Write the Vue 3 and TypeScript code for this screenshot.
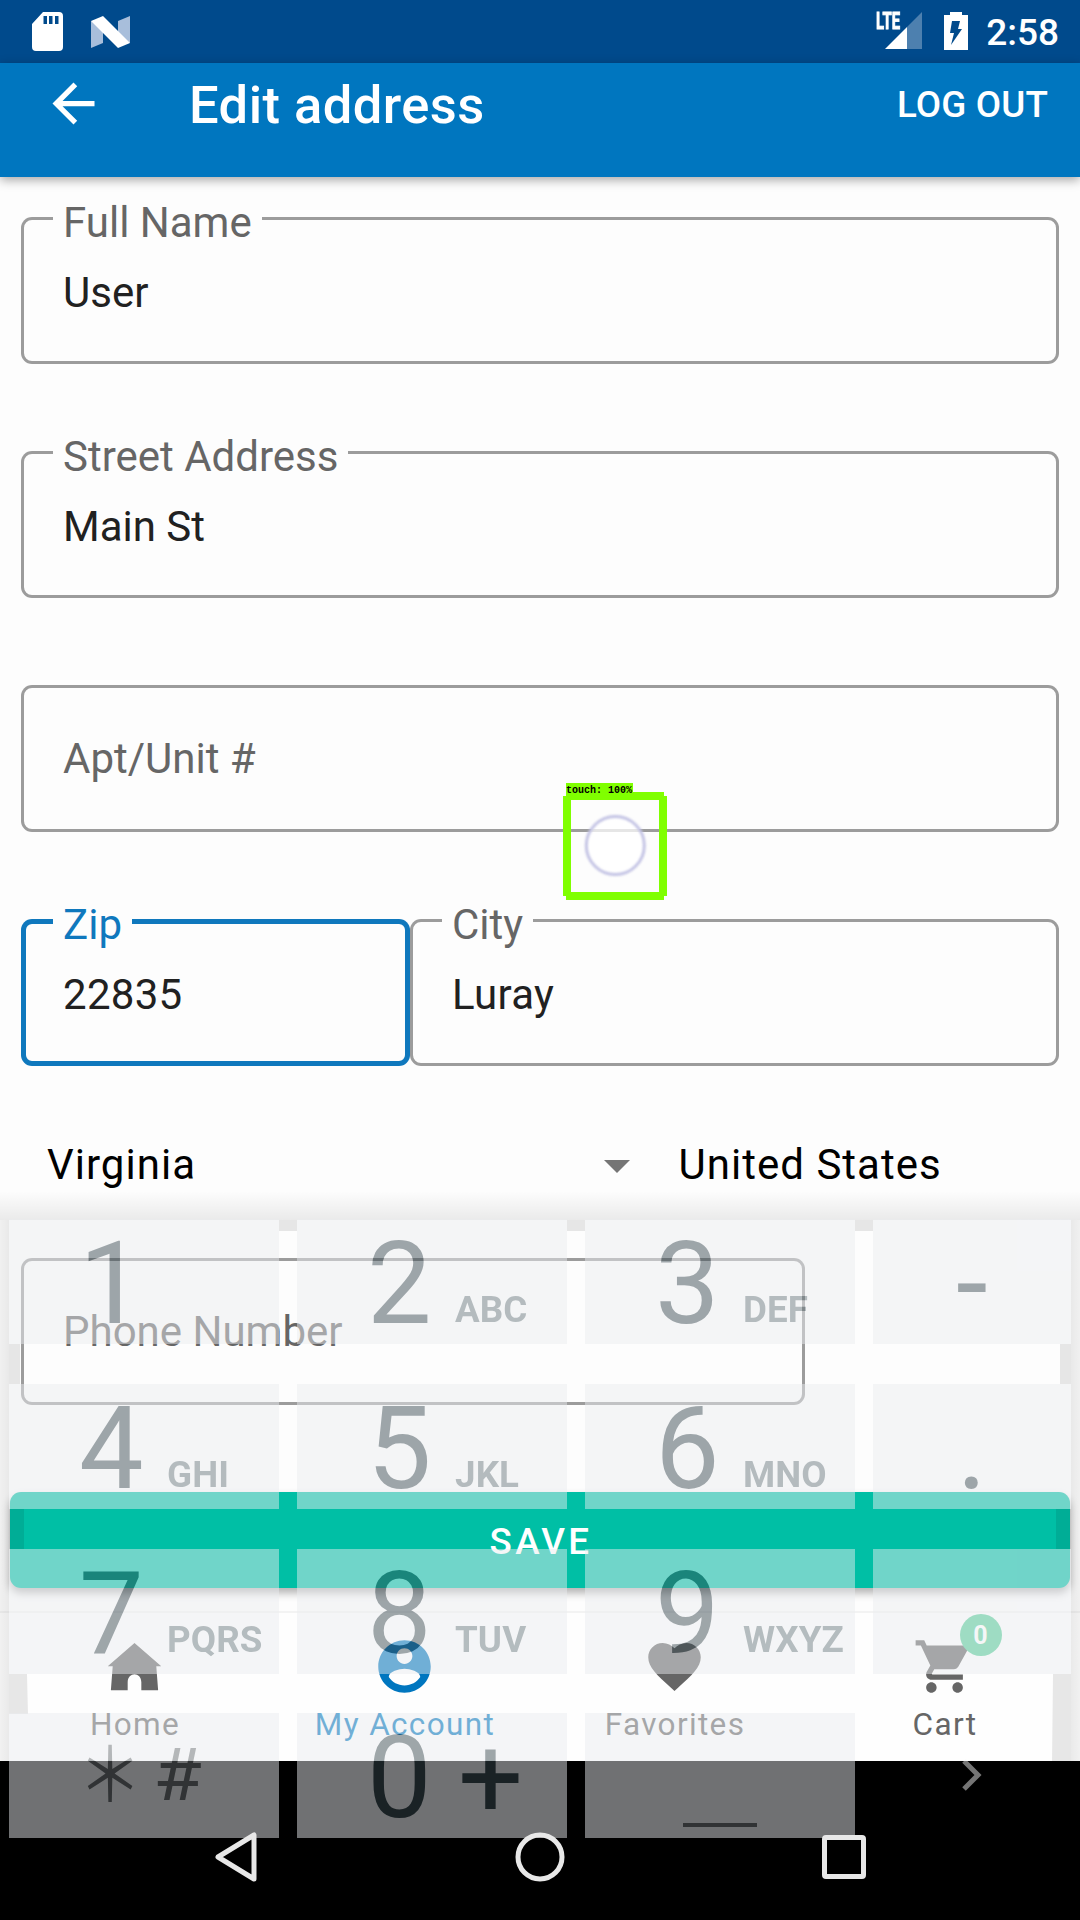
<script setup lang="ts">
interface Field {
  label: string
  value?: string
  kind?: string
}

interface Key {
  main?: string
  sub?: string
  kind?: string
}

const fields: Field[] = [
  { label: 'Full Name', value: 'User' },
  { label: 'Street Address', value: 'Main St' },
  { label: 'Apt/Unit #' },
]

const locality: Field[] = [
  { label: 'Zip', value: '22835', kind: 'zip focused' },
  { label: 'City', value: 'Luray', kind: 'city' },
]

const tabs = [
  {
    label: 'Home',
    icon: 'M12 3 L1.8 11.9 L3.7 11.9 L3 21 L9.4 21 V18 C9.4 13.9 14.6 13.9 14.6 18 V21 L21 21 L20.3 11.9 L22.2 11.9 Z',
  },
  {
    label: 'My Account',
    active: true,
    icon: 'M12 2C6.48 2 2 6.48 2 12s4.48 10 10 10 10-4.48 10-10S17.52 2 12 2zm0 3c1.66 0 3 1.34 3 3s-1.34 3-3 3-3-1.34-3-3 1.34-3 3-3zm0 14.2c-2.5 0-4.71-1.28-6-3.22.03-1.99 4-3.08 6-3.08 1.99 0 5.97 1.09 6 3.08-1.29 1.94-3.5 3.22-6 3.22z',
  },
  {
    label: 'Favorites',
    icon: 'M12 21.35l-1.45-1.32C5.4 15.36 2 12.28 2 8.5 2 5.42 4.42 3 7.5 3c1.74 0 3.41.81 4.5 2.09C13.09 3.81 14.76 3 16.5 3 19.58 3 22 5.42 22 8.5c0 3.78-3.4 6.86-8.55 11.54L12 21.35z',
  },
  {
    label: 'Cart',
    badge: '0',
    icon: 'M7 18c-1.1 0-1.99.9-1.99 2S5.9 22 7 22s2-.9 2-2-.9-2-2-2zM1 2v2h2l3.6 7.59-1.35 2.45c-.16.28-.25.61-.25.96 0 1.1.9 2 2 2h12v-2H7.42c-.14 0-.25-.11-.25-.25l.03-.12.9-1.63h7.45c.75 0 1.41-.41 1.75-1.03l3.58-6.49c.08-.14.12-.31.12-.48 0-.55-.45-1-1-1H5.21l-.94-2H1zm16 16c-1.1 0-1.99.9-1.99 2s.89 2 1.99 2 2-.9 2-2-.9-2-2-2z',
  },
]

const keys: Key[] = [
  { main: '1' },
  { main: '2', sub: 'ABC' },
  { main: '3', sub: 'DEF' },
  { main: '-', kind: 'punct' },
  { main: '4', sub: 'GHI' },
  { main: '5', sub: 'JKL' },
  { main: '6', sub: 'MNO' },
  { main: '.', kind: 'punct' },
  { main: '7', sub: 'PQRS' },
  { main: '8', sub: 'TUV' },
  { main: '9', sub: 'WXYZ' },
  { kind: 'blank' },
  { main: '＊', sub: '#', kind: 'symbols' },
  { main: '0', sub: '+', kind: 'zero' },
  { kind: 'space' },
  { kind: 'next' },
]
</script>

<template>
  <div class="screen">
    <header class="status">
      <div class="status-left">
        <svg class="sd" width="31" height="39" viewBox="0 0 31 39">
          <path fill="#fff" fill-rule="evenodd" d="M11 0H27Q31 0 31 4V35Q31 39 27 39H4Q0 39 0 35V12ZM11.5 4V12H15V4ZM17 4V12H20.5V4ZM23 4V12H26.5V4Z" />
        </svg>
        <svg class="nougat" width="39" height="32" viewBox="0 0 39 32">
          <path fill="#a8bedb" d="M0 5 12 9V27L0 32ZM27 5 39 0V27L27 23Z" />
          <path fill="#fff" d="M0 5 12 0 39 27 27 32Z" />
        </svg>
      </div>
      <div class="status-right">
        <div class="signal">
          <svg width="46" height="38" viewBox="0 0 46 38">
            <path fill="#fff" d="M9 37 31 15V37Z" />
            <path fill="#4d80af" d="M31 15 46 0V37H31Z" />
          </svg>
          <span class="lte">LTE</span>
        </div>
        <svg class="battery" width="24" height="38" viewBox="0 0 24 38">
          <path fill="#fff" d="M6 0H18V3H24V38H0V3H6Z" />
          <path fill="#004a8c" d="M8 9H16L14 17H18L7 33L10 21H6Z" />
        </svg>
        <span class="clock">2:58</span>
      </div>
    </header>

    <div class="appbar">
      <svg class="back" width="63" height="63" viewBox="0 0 24 24">
        <path fill="#fff" d="M20 11H7.83l5.59-5.59L12 4l-8 8 8 8 1.41-1.41L7.83 13H20v-2z" />
      </svg>
      <h1>Edit address</h1>
      <span class="logout">LOG OUT</span>
    </div>

    <main>
      <div v-for="f in fields" :key="f.label" class="field" :class="{ empty: !f.value }">
        <span class="label">{{ f.label }}</span>
        <span v-if="f.value" class="value">{{ f.value }}</span>
      </div>
      <div class="row">
        <div v-for="f in locality" :key="f.label" class="field" :class="f.kind">
          <span class="label">{{ f.label }}</span>
          <span class="value">{{ f.value }}</span>
        </div>
      </div>
      <div class="selects">
        <div class="select state">
          <span>Virginia</span>
          <i class="caret"></i>
        </div>
        <div class="select country"><span>United States</span></div>
      </div>
      <div class="field empty phone"><span class="label">Phone Number</span></div>
      <button class="save">SAVE</button>
    </main>

    <nav class="tabs">
      <div v-for="t in tabs" :key="t.label" class="tab" :class="{ active: t.active }">
        <div class="icon">
          <svg width="63" height="63" viewBox="0 0 24 24"><path fill="currentColor" :d="t.icon" /></svg>
          <span v-if="t.badge" class="badge">{{ t.badge }}</span>
        </div>
        <span class="tab-label">{{ t.label }}</span>
      </div>
    </nav>

    <footer class="system"></footer>

    <svg class="keyboard-shadow" width="1080" height="570" viewBox="0 0 1080 570">
      <defs>
        <linearGradient id="fade" x1="0" y1="0" x2="0" y2="1">
          <stop offset="0" stop-color="#000" stop-opacity="0" />
          <stop offset="1" stop-color="#000" stop-opacity="0.075" />
        </linearGradient>
        <linearGradient id="left" x1="0" x2="1">
          <stop offset="0" stop-color="#000" stop-opacity="0.05" />
          <stop offset="1" stop-color="#000" stop-opacity="0.08" />
        </linearGradient>
        <linearGradient id="right" x1="1" x2="0">
          <stop offset="0" stop-color="#000" stop-opacity="0.05" />
          <stop offset="1" stop-color="#000" stop-opacity="0.08" />
        </linearGradient>
      </defs>
      <rect y="0" width="1080" height="29" fill="url(#fade)" />
      <rect y="29" width="9" height="541" fill="url(#left)" />
      <rect x="1071" y="29" width="9" height="541" fill="url(#right)" />
      <g fill="#000" fill-opacity="0.09">
        <path d="M279 29h18v11h-18zM567 29h18v11h-18zM855 29h18v11h-18z" />
        <path d="M9 153h11v40H9zM1060 153h11v40h-11z" />
        <path d="M9 318h15v40H9zM1056 318h15v40h-15z" />
        <path d="M9 483h18l1 40H9zM1053 483h18v87h-19z" />
      </g>
    </svg>

    <div class="keyboard">
      <div v-for="(k, i) in keys" :key="i" class="key" :class="k.kind">
        <span v-if="k.main" class="main">{{ k.main }}</span>
        <span v-if="k.sub" class="sub">{{ k.sub }}</span>
        <i v-if="k.kind === 'space'" class="bar"></i>
        <svg v-if="k.kind === 'next'" width="20" height="32" viewBox="0 0 20 32">
          <path fill="none" stroke="#f4f4f4" stroke-width="5" d="M2 2 16 16 2 30" />
        </svg>
      </div>
    </div>

    <div class="system-buttons">
      <svg width="44" height="52" viewBox="0 0 44 52">
        <path fill="none" stroke="#e8e8e8" stroke-width="5" stroke-linejoin="round" d="M40 4V48L4 26Z" />
      </svg>
      <svg width="52" height="52" viewBox="0 0 52 52">
        <circle cx="26" cy="26" r="22" fill="none" stroke="#e8e8e8" stroke-width="5" />
      </svg>
      <svg width="44" height="44" viewBox="0 0 44 44">
        <rect x="2.5" y="2.5" width="39" height="39" rx="1.5" fill="none" stroke="#e8e8e8" stroke-width="5" />
      </svg>
    </div>

    <div class="touch">
      <span class="touch-label">touch: 100%</span>
      <svg width="104" height="108" viewBox="0 0 104 108">
        <circle cx="52.3" cy="53.5" r="29" fill="#fff" fill-opacity="0.75" />
        <circle class="ring" cx="52.3" cy="53.5" r="29" fill="none" stroke="#c3c3e4" stroke-width="3" />
        <path fill="#80ff00" fill-rule="evenodd" d="M3 0H101V4H104V104H101V108H3V104H0V4H3ZM8 8V100H96V8Z" />
      </svg>
    </div>
  </div>
</template>

<style>
body {
  margin: 0;
  background: #fdfdfd;
}
</style>

<style scoped>
.screen {
  position: relative;
  width: 1080px;
  height: 1920px;
  overflow: hidden;
  display: flex;
  flex-direction: column;
  background: #fdfdfd;
  font-family: Roboto, sans-serif;
}
svg {
  display: block;
}
.status {
  height: 63px;
  flex: none;
  background: #004a8c;
  display: flex;
  justify-content: space-between;
  box-sizing: border-box;
  padding: 0 21px 0 32px;
}
.status-left,
.status-right {
  display: flex;
}
.sd {
  margin-top: 12px;
}
.nougat {
  margin: 16px 0 0 28px;
}
.signal {
  position: relative;
  margin-top: 12px;
}
.lte {
  position: absolute;
  left: 0;
  top: -2px;
  font-size: 23px;
  line-height: 24px;
  font-weight: 700;
  color: #fff;
  -webkit-text-stroke: 0.8px #fff;
  transform: scaleX(0.65);
  transform-origin: left;
}
.battery {
  margin: 12px 18px 0 22px;
}
.clock {
  color: #fff;
  font-size: 37px;
  line-height: 66px;
  font-weight: 500;
}
.appbar {
  height: 114px;
  flex: none;
  background: #0076bf;
  display: flex;
  align-items: flex-start;
  box-sizing: border-box;
  padding: 0 32px 0 42px;
  box-shadow: 0 3px 10px rgba(0, 0, 0, 0.35);
  color: #fff;
}
.back {
  margin-top: 9px;
}
h1 {
  margin: 11px 0 0 84px;
  font-size: 52.5px;
  line-height: 62px;
  font-weight: 500;
  letter-spacing: 0.45px;
}
.logout {
  margin: 20px 0 0 auto;
  font-size: 36.75px;
  line-height: 44px;
  font-weight: 500;
  letter-spacing: 0.15px;
}
main {
  padding: 40px 21px 0;
  display: flex;
  flex-direction: column;
}
.field {
  position: relative;
  height: 147px;
  box-sizing: border-box;
  padding: 51px 42px 0;
  margin-bottom: 87px;
  border-radius: 11px;
  box-shadow: inset 0 0 0 3px #9c9c9c;
  font-size: 42px;
  line-height: 50px;
  color: #212121;
}
.zip .value,
.city .value {
  letter-spacing: 0.3px;
}
.label {
  position: absolute;
  left: 32px;
  top: -19px;
  padding: 0 10px;
  background: #fdfdfd;
  color: #666;
}
.empty .label {
  position: static;
  padding: 0;
  background: none;
}
.empty {
  padding-top: 49px;
}
.row {
  display: flex;
}
.row .field {
  margin-bottom: 74px;
}
.zip {
  width: 389px;
}
.city {
  width: 649px;
}
.focused {
  box-shadow: inset 0 0 0 5px #0f78bd;
}
.focused .label {
  color: #0f78bd;
}
.selects {
  display: flex;
  height: 50px;
  margin-bottom: 68px;
  font-size: 42px;
  line-height: 50px;
  letter-spacing: 1.02px;
  color: #000;
}
.select {
  display: flex;
  justify-content: space-between;
}
.state {
  width: 583px;
  padding-left: 26px;
}
.country {
  padding-left: 48.5px;
}
.caret {
  margin-top: 20px;
  height: 0;
  border: 13px solid transparent;
  border-top-color: #757575;
  border-bottom: 0;
}
.phone {
  width: 784px;
}
.save {
  height: 96px;
  margin: 0 -11px 23px;
  padding: 3px 0 0 2px;
  box-sizing: border-box;
  border: 0;
  border-radius: 11px;
  background: #00bfa5;
  box-shadow: 0 5px 8px rgba(0, 0, 0, 0.3);
  color: #fff;
  font: 500 36.75px/93px Roboto, sans-serif;
  letter-spacing: 3.3px;
}
.tabs {
  height: 150px;
  box-sizing: border-box;
  flex: none;
  border-top: 2px solid #f3f3f3;
  background: #fefefe;
  display: flex;
}
.tab {
  flex: 1;
  display: flex;
  flex-direction: column;
  align-items: center;
  padding-top: 22px;
  color: #666;
}
.active {
  color: #0076bf;
}
.icon {
  position: relative;
  margin-right: 2px;
}
.badge {
  position: absolute;
  left: 47px;
  top: -21px;
  width: 42px;
  height: 42px;
  border-radius: 50%;
  background: #58ce9a;
  color: #fff;
  text-align: center;
  font-size: 25px;
  line-height: 44px;
  font-weight: 700;
}
.tab-label {
  margin-top: 8px;
  font-size: 31.5px;
  line-height: 37px;
  letter-spacing: 1.35px;
}
.system {
  flex: 1;
  background: #000;
}
.keyboard-shadow {
  position: absolute;
  left: 0;
  top: 1191px;
}
.keyboard {
  position: absolute;
  left: 9px;
  top: 1219px;
  display: grid;
  grid-template-columns: 270px 270px 270px 198px;
  grid-auto-rows: 125px;
  gap: 39.8px 18px;
  opacity: 0.48;
  color: #37474f;
}
.key {
  background: #ebedf0;
  box-sizing: border-box;
  padding-left: 70px;
  display: flex;
}
.main {
  width: 88px;
  font-size: 115px;
  line-height: 130px;
}
.sub {
  margin-top: 71px;
  font-size: 36.75px;
  line-height: 40px;
  font-weight: 700;
  letter-spacing: 0.1px;
  color: #66757b;
}
.punct {
  padding-left: 0;
  justify-content: center;
}
.punct .main {
  width: auto;
}
.symbols {
  padding-left: 67px;
}
.symbols .main {
  font-family: 'Noto Sans CJK JP', sans-serif;
  font-size: 68px;
  line-height: 68px;
  width: 68px;
  height: 68px;
  margin-top: 23px;
  color: #666c70;
  transform: scale(0.95, 1.1);
}
.symbols .sub {
  margin: 19px 0 0 11px;
  height: 86px;
  font-size: 73px;
  line-height: 86px;
  font-weight: 400;
  color: #666c70;
  transform: scaleX(1.08);
}
.zero .sub {
  margin-top: 0;
  font-size: 115px;
  line-height: 130px;
  font-weight: 400;
  color: #37474f;
  margin-left: 3px;
}
.next {
  background: none;
  padding: 46px 0 0 89px;
}
.space {
  padding: 110px 0 0 98px;
}
.bar {
  width: 74px;
  height: 4px;
  background: #666c70;
}
.system-buttons {
  position: absolute;
  left: 214px;
  width: 652px;
  top: 1831px;
  height: 52px;
  display: flex;
  align-items: center;
  justify-content: space-between;
}
.touch {
  position: absolute;
  left: 563px;
  top: 792px;
}
.touch-label {
  position: absolute;
  left: 3px;
  top: -9px;
  width: 67px;
  height: 12px;
  background: #80ff00;
  color: #000;
  font: bold 10px/15px 'Liberation Mono', monospace;
  white-space: nowrap;
}
.ring {
  filter: blur(0.8px);
}
</style>
